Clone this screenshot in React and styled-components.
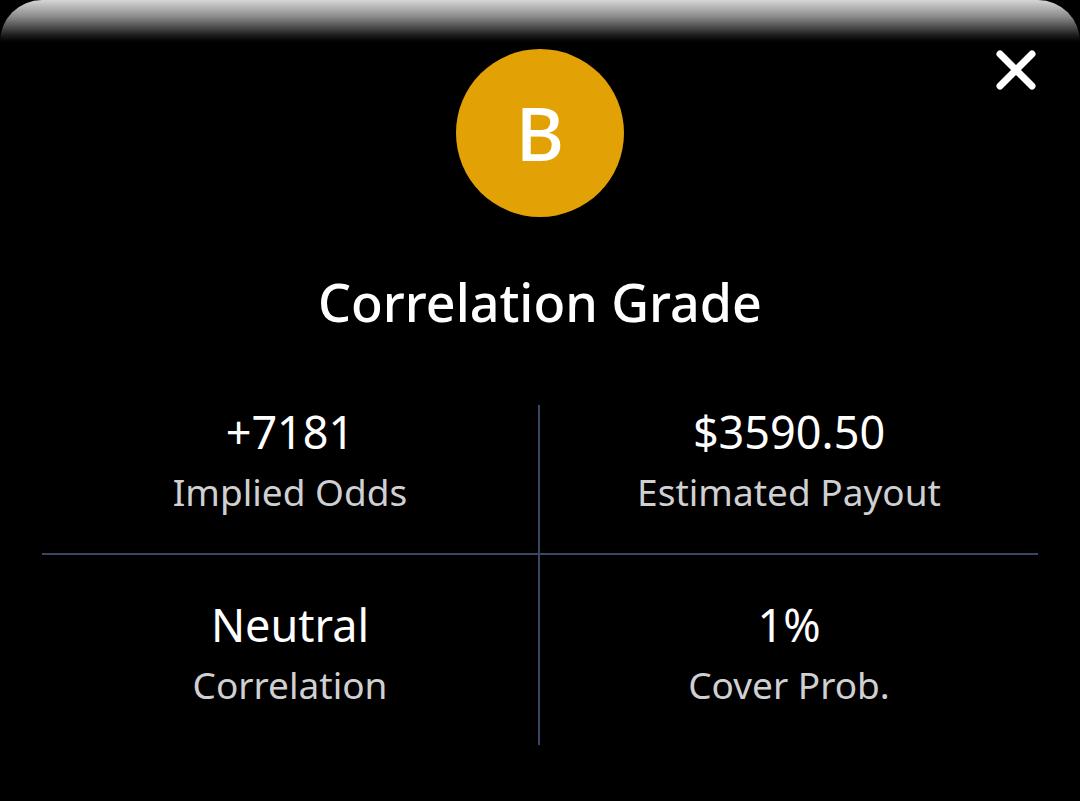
import React from "react";
import styled, { createGlobalStyle } from "styled-components";

const Global = createGlobalStyle`
  html, body { margin: 0; padding: 0; background: #000; }
  body { font-family: "Noto Sans", "Open Sans", sans-serif; }
  #root { min-height: 801px; }
`;

const Page = styled.div`
  width: 1080px;
  height: 801px;
  background: #000;
  overflow: hidden;
  display: flex;
  flex-direction: column;
`;

const TopStrip = styled.div`
  height: 42px;
  border-radius: 44px 44px 0 0;
  background: linear-gradient(to bottom, #d6d6d6 0%, #8a8a8a 40%, #1a1a1a 85%, #000 100%);
  flex: none;
`;

const Sheet = styled.div`
  position: relative;
  display: flex;
  flex-direction: column;
  align-items: center;
  padding-top: 7px;
`;

const CloseButton = styled.button`
  position: absolute;
  top: 6px;
  right: 42px;
  width: 44px;
  height: 44px;
  padding: 0;
  border: none;
  background: transparent;
  display: flex;
  align-items: center;
  justify-content: center;
  cursor: pointer;
`;

const GradeBadge = styled.div`
  width: 168px;
  height: 168px;
  border-radius: 50%;
  background: #e2a206;
  color: #fff;
  display: flex;
  align-items: center;
  justify-content: center;
  font-size: 74px;
  font-weight: 500;
  line-height: 1;
`;

const Title = styled.h1`
  margin: 55px 0 0;
  font-size: 52px;
  font-weight: 500;
  line-height: 60px;
  color: #fff;
  letter-spacing: 0;
`;

const Grid = styled.div`
  align-self: stretch;
  margin: 73px 42px 0;
  display: grid;
  grid-template-columns: 1fr 1fr;
`;

const Cell = styled.div`
  display: flex;
  flex-direction: column;
  align-items: center;
  padding-top: ${(p) => p.$pt}px;
  height: ${(p) => p.$h}px;
  box-sizing: border-box;
  border-right: ${(p) => (p.$right ? "2px solid #3a4763" : "none")};
  border-bottom: ${(p) => (p.$bottom ? "2px solid #3a4763" : "none")};
`;

const Value = styled.div`
  font-size: 45px;
  line-height: 54px;
  color: #fff;
`;

const Label = styled.div`
  margin-top: 6px;
  font-size: 37px;
  line-height: 54px;
  color: #d0d0d2;
`;

const stats = [
  { value: "+7181", label: "Implied Odds" },
  { value: "$3590.50", label: "Estimated Payout" },
  { value: "Neutral", label: "Correlation" },
  { value: "1%", label: "Cover Prob." },
];

export default function App() {
  return (
    <Page>
      <Global />
      <TopStrip />
      <Sheet>
        <CloseButton aria-label="Close">
          <svg width="44" height="44" viewBox="0 0 44 44">
            <path
              d="M6 6 L38 38 M38 6 L6 38"
              stroke="#fff"
              strokeWidth="7"
              strokeLinecap="round"
              fill="none"
            />
          </svg>
        </CloseButton>
        <GradeBadge>B</GradeBadge>
        <Title>Correlation Grade</Title>
        <Grid>
          {stats.map((s, i) => {
            const top = i < 2;
            return (
              <Cell
                key={s.label}
                $right={i % 2 === 0}
                $bottom={top}
                $pt={top ? 0 : 43}
                $h={top ? 150 : 190}
              >
                <Value>{s.value}</Value>
                <Label>{s.label}</Label>
              </Cell>
            );
          })}
        </Grid>
      </Sheet>
    </Page>
  );
}
